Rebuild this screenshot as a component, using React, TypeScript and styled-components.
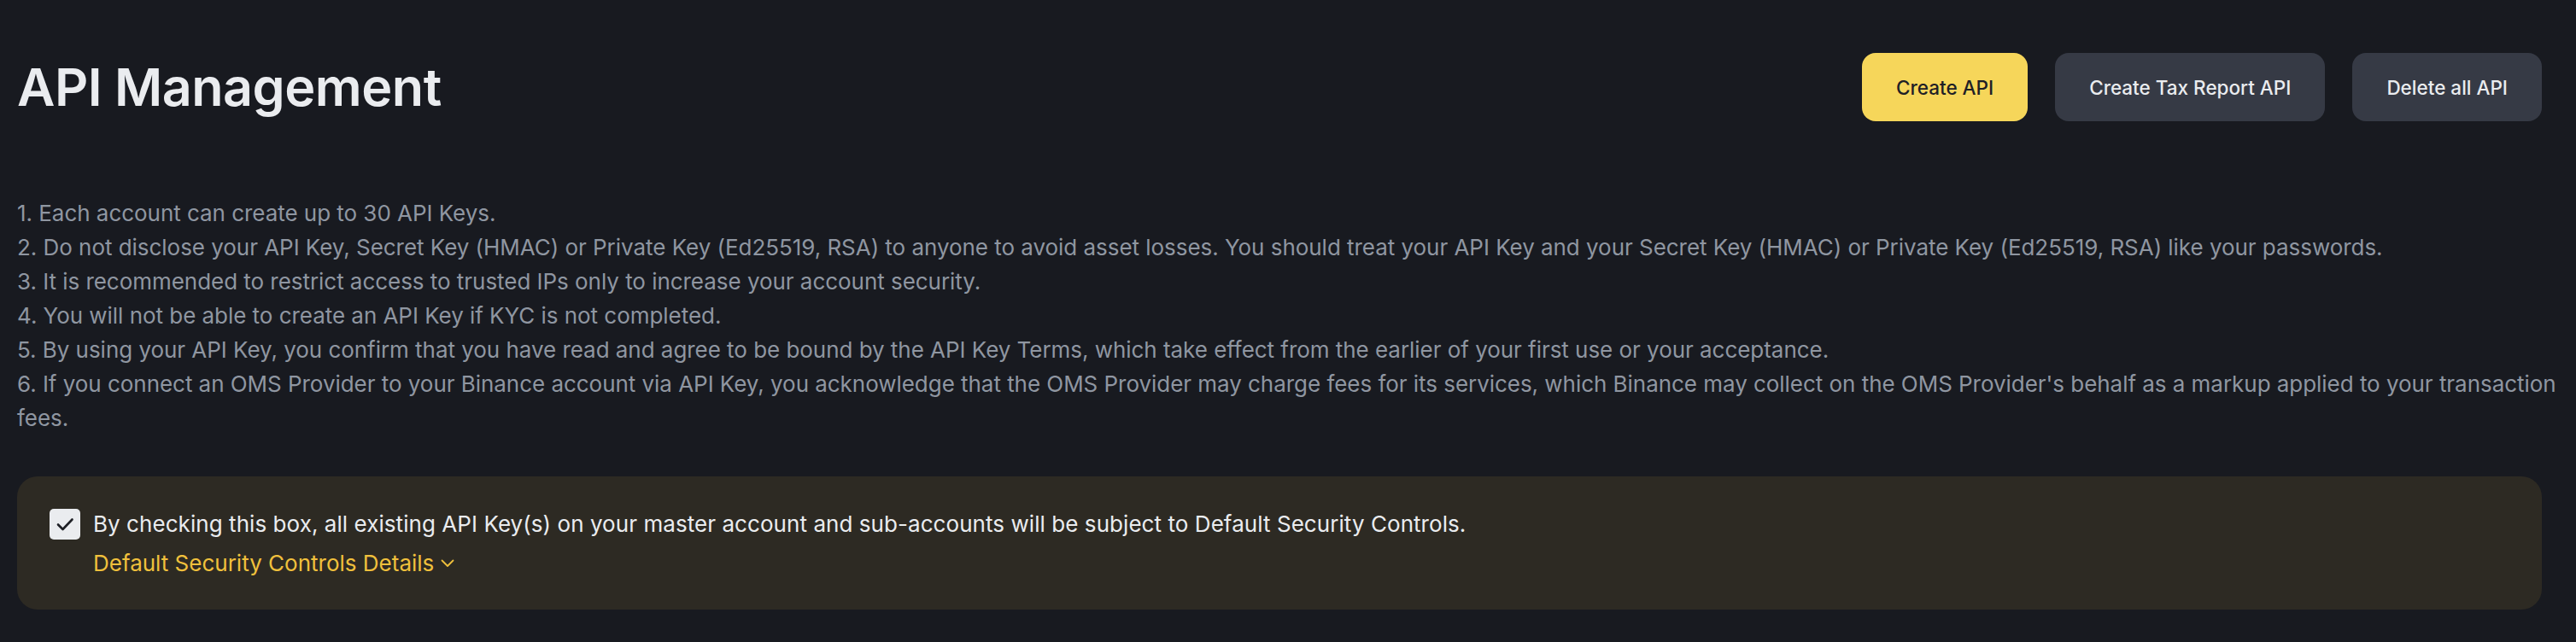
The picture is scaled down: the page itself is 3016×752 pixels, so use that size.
import React from "react";
import styled, { createGlobalStyle } from "styled-components";

const GlobalStyle = createGlobalStyle`
  html, body {
    margin: 0;
    padding: 0;
    background: #181a20;
  }
  body {
    font-family: "Inter", "Liberation Sans", sans-serif;
    -webkit-font-smoothing: antialiased;
  }
`;

const Page = styled.div`
  width: 3016px;
  min-height: 752px;
  box-sizing: border-box;
  padding: 62px 40px 0 20px;
  background: #181a20;
`;

const Header = styled.div`
  display: flex;
  align-items: center;
  justify-content: space-between;
  height: 80px;
`;

const Title = styled.h1`
  margin: 0;
  font-size: 61px;
  line-height: 80px;
  font-weight: 600;
  color: #eaecef;
  letter-spacing: -0.5px;
`;

const Actions = styled.div`
  display: flex;
  gap: 32px;
`;

const Button = styled.button<{ $primary?: boolean }>`
  height: 80px;
  padding: 0 40px;
  border: none;
  border-radius: 16px;
  font-family: inherit;
  font-size: 22.5px;
  font-weight: 500;
  cursor: pointer;
  background: ${(p) => (p.$primary ? "#f6d65a" : "#363a45")};
  color: ${(p) => (p.$primary ? "#1e2026" : "#eaecef")};
`;

const Notes = styled.div`
  margin-top: 88px;
  color: #8f96a1;
  font-size: 26px;
  line-height: 40px;
  letter-spacing: -0.04px;
`;

const Note = styled.div`
  white-space: nowrap;
`;

const Callout = styled.div`
  margin-top: 48px;
  background: #2d2a23;
  border-radius: 24px;
  padding: 38px 38px 36px;
  display: flex;
  gap: 15px;
  align-items: flex-start;
`;

const CheckBox = styled.span`
  flex: none;
  width: 36px;
  height: 36px;
  border-radius: 5px;
  background: #eaecef;
  display: flex;
  align-items: center;
  justify-content: center;
`;

const CalloutBody = styled.div`
  display: flex;
  flex-direction: column;
  gap: 10px;
`;

const CalloutText = styled.div`
  color: #eaecef;
  font-size: 26px;
  line-height: 36px;
  letter-spacing: 0.06px;
  white-space: nowrap;
`;

const DetailsLink = styled.a`
  display: inline-flex;
  align-items: center;
  gap: 8px;
  color: #f0c03c;
  font-size: 26px;
  line-height: 36px;
  text-decoration: none;
  cursor: pointer;
`;

export default function App() {
  return (
    <>
      <GlobalStyle />
      <Page>
        <Header>
          <Title>API Management</Title>
          <Actions>
            <Button $primary>Create API</Button>
            <Button>Create Tax Report API</Button>
            <Button>Delete all API</Button>
          </Actions>
        </Header>
        <Notes>
          <Note>1. Each account can create up to 30 API Keys.</Note>
          <Note>
            2. Do not disclose your API Key, Secret Key (HMAC) or Private Key (Ed25519, RSA) to anyone to avoid asset
            losses. You should treat your API Key and your Secret Key (HMAC) or Private Key (Ed25519, RSA) like your
            passwords.
          </Note>
          <Note>3. It is recommended to restrict access to trusted IPs only to increase your account security.</Note>
          <Note>4. You will not be able to create an API Key if KYC is not completed.</Note>
          <Note>
            5. By using your API Key, you confirm that you have read and agree to be bound by the API Key Terms, which
            take effect from the earlier of your first use or your acceptance.
          </Note>
          <Note>
            6. If you connect an OMS Provider to your Binance account via API Key, you acknowledge that the OMS Provider
            may charge fees for its services, which Binance may collect on the OMS Provider's behalf as a markup applied
            to your transaction
            <br />
            fees.
          </Note>
        </Notes>
        <Callout>
          <CheckBox>
            <svg width="24" height="24" viewBox="0 0 24 24" fill="none">
              <path d="M4 12.5L9.5 18L20.5 6.5" stroke="#1e2026" strokeWidth="2.6" strokeLinecap="round" strokeLinejoin="round" />
            </svg>
          </CheckBox>
          <CalloutBody>
            <CalloutText>
              By checking this box, all existing API Key(s) on your master account and sub-accounts will be subject to
              Default Security Controls.
            </CalloutText>
            <div>
              <DetailsLink>
                Default Security Controls Details
                <svg width="16" height="10" viewBox="0 0 16 10" fill="none">
                  <path d="M1.5 1.5L8 8L14.5 1.5" stroke="#f0c03c" strokeWidth="1.8" strokeLinecap="round" strokeLinejoin="round" />
                </svg>
              </DetailsLink>
            </div>
          </CalloutBody>
        </Callout>
      </Page>
    </>
  );
}
